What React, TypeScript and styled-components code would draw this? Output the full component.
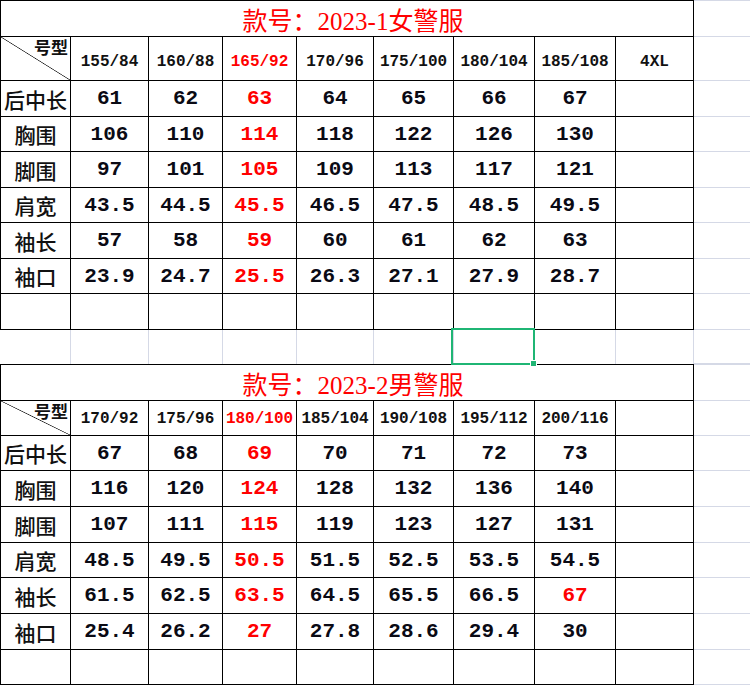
import styled, { createGlobalStyle } from "styled-components";

const GlobalStyle = createGlobalStyle`
	html, body {
		margin: 0;
		padding: 0;
		background: #fff;
	}
`;

const LINE = "#000";
const GRID = "#d5d9e6";
const COLS = [71, 78, 74, 74, 77, 80, 81, 81, 78];

type Table = {
	title: string;
	headerH: number;
	headerPad: number;
	sizes: string[];
	redCol: number;
	rows: { label: string; values: string[]; h: number; red?: number[] }[];
};

const tables: Table[] = [
	{
		title: "款号：2023-1女警服",
		headerH: 44,
		headerPad: 7,
		sizes: ["155/84", "160/88", "165/92", "170/96", "175/100", "180/104", "185/108", "4XL"],
		redCol: 2,
		rows: [
			{ label: "后中长", values: ["61", "62", "63", "64", "65", "66", "67", ""], h: 36 },
			{ label: "胸围", values: ["106", "110", "114", "118", "122", "126", "130", ""], h: 35 },
			{ label: "脚围", values: ["97", "101", "105", "109", "113", "117", "121", ""], h: 36 },
			{ label: "肩宽", values: ["43.5", "44.5", "45.5", "46.5", "47.5", "48.5", "49.5", ""], h: 35 },
			{ label: "袖长", values: ["57", "58", "59", "60", "61", "62", "63", ""], h: 36 },
			{ label: "袖口", values: ["23.9", "24.7", "25.5", "26.3", "27.1", "27.9", "28.7", ""], h: 35 },
			{ label: "", values: ["", "", "", "", "", "", "", ""], h: 36 },
		],
	},
	{
		title: "款号：2023-2男警服",
		headerH: 35,
		headerPad: 2,
		sizes: ["170/92", "175/96", "180/100", "185/104", "190/108", "195/112", "200/116", ""],
		redCol: 2,
		rows: [
			{ label: "后中长", values: ["67", "68", "69", "70", "71", "72", "73", ""], h: 35 },
			{ label: "胸围", values: ["116", "120", "124", "128", "132", "136", "140", ""], h: 36 },
			{ label: "脚围", values: ["107", "111", "115", "119", "123", "127", "131", ""], h: 36 },
			{ label: "肩宽", values: ["48.5", "49.5", "50.5", "51.5", "52.5", "53.5", "54.5", ""], h: 35 },
			{ label: "袖长", values: ["61.5", "62.5", "63.5", "64.5", "65.5", "66.5", "67", ""], h: 36, red: [6] },
			{ label: "袖口", values: ["25.4", "26.2", "27", "27.8", "28.6", "29.4", "30", ""], h: 36 },
			{ label: "", values: ["", "", "", "", "", "", "", ""], h: 35 },
		],
	},
];

function SizeTable({ table }: { table: Table }) {
	return (
		<>
			<Row $h={37}>
				<TitleCell>{table.title}</TitleCell>
				<Fill $top />
			</Row>
			<Row $h={table.headerH}>
				<CornerCell $w={COLS[0]}>
					<CornerText>号型</CornerText>
				</CornerCell>
				{table.sizes.map((s, i) => (
					<Cell key={i} $w={COLS[i + 1]} $pad={table.headerPad}>
						<SizeText $red={i === table.redCol}>{s}</SizeText>
					</Cell>
				))}
				<Fill />
			</Row>
			{table.rows.map((r, ri) => (
				<Row key={ri} $h={r.h}>
					<Cell $w={COLS[0]} $first>
						<Label>{r.label}</Label>
					</Cell>
					{r.values.map((v, i) => (
						<Cell key={i} $w={COLS[i + 1]}>
							<Num $red={i === table.redCol || (r.red ?? []).includes(i)}>{v}</Num>
						</Cell>
					))}
					<Fill />
				</Row>
			))}
		</>
	);
}

export default function App() {
	return (
		<>
			<GlobalStyle />
			<Sheet>
				<SizeTable table={tables[0]} />
				<Row $h={34}>
					{COLS.map((w, i) => (
						<GapCell key={i} $w={w} $selected={i === 6} />
					))}
					<Fill />
				</Row>
				<SizeTable table={tables[1]} />
			</Sheet>
		</>
	);
}

const Sheet = styled.div`
	width: 750px;
	height: 685px;
	overflow: hidden;
	display: flex;
	flex-direction: column;
	background: #fff;
`;

const Row = styled.div<{ $h: number }>`
	display: flex;
	flex: none;
	height: ${(p) => p.$h}px;
`;

const Cell = styled.div<{ $w: number; $first?: boolean; $pad?: number }>`
	box-sizing: border-box;
	flex: none;
	width: ${(p) => p.$w}px;
	display: flex;
	align-items: center;
	justify-content: center;
	padding-top: ${(p) => p.$pad ?? 0}px;
	border-right: 1px solid ${LINE};
	border-bottom: 1px solid ${LINE};
	border-left: ${(p) => (p.$first ? `1px solid ${LINE}` : "none")};
	white-space: nowrap;
`;

const TitleCell = styled.div`
	box-sizing: border-box;
	flex: none;
	width: 694px;
	display: flex;
	align-items: center;
	justify-content: center;
	border: 1px solid ${LINE};
	color: #ff0000;
	font-family: "Liberation Serif", "Noto Sans CJK SC", serif;
	font-size: 25px;
	padding-left: 12px;
`;

const CornerCell = styled.div<{ $w: number }>`
	box-sizing: border-box;
	flex: none;
	width: ${(p) => p.$w}px;
	display: flex;
	justify-content: flex-end;
	align-items: flex-start;
	padding: 0 2px 0 0;
	border-left: 1px solid ${LINE};
	border-right: 1px solid ${LINE};
	border-bottom: 1px solid ${LINE};
	background: linear-gradient(
		to top right,
		transparent calc(50% - 0.7px),
		#222 50%,
		transparent calc(50% + 0.7px)
	);
`;

const CornerText = styled.span`
	font-family: "Noto Sans CJK SC", sans-serif;
	font-weight: 700;
	font-size: 17px;
	line-height: 20px;
	color: #111;
`;

const Label = styled.span`
	font-family: "Noto Sans CJK SC", sans-serif;
	font-weight: 500;
	font-size: 21px;
	color: #111;
`;

const SizeText = styled.span<{ $red?: boolean }>`
	font-family: "Liberation Mono", monospace;
	font-weight: 700;
	font-size: 16px;
	color: ${(p) => (p.$red ? "#ff0000" : "#111")};
`;

const Num = styled.span<{ $red?: boolean }>`
	font-family: "Liberation Mono", monospace;
	font-weight: 700;
	font-size: 21px;
	color: ${(p) => (p.$red ? "#ff0000" : "#0a0a14")};
`;

const Fill = styled.div<{ $top?: boolean }>`
	flex: 1;
	box-sizing: border-box;
	border-bottom: 1px solid ${GRID};
	border-top: ${(p) => (p.$top ? `1px solid ${GRID}` : "none")};
`;

const GapCell = styled.div<{ $w: number; $selected?: boolean }>`
	position: relative;
	box-sizing: border-box;
	flex: none;
	width: ${(p) => p.$w}px;
	border-right: 1px solid ${GRID};

	${(p) =>
		p.$selected &&
		`
		&::after {
			content: "";
			position: absolute;
			left: -3px;
			top: -2px;
			right: -1px;
			bottom: -1px;
			border: 2px solid #1fb574;
			z-index: 2;
		}
		&::before {
			content: "";
			position: absolute;
			right: -3px;
			bottom: -3px;
			width: 5px;
			height: 5px;
			background: #1fb574;
			border: 1px solid #fff;
			z-index: 3;
		}
	`}
`;
